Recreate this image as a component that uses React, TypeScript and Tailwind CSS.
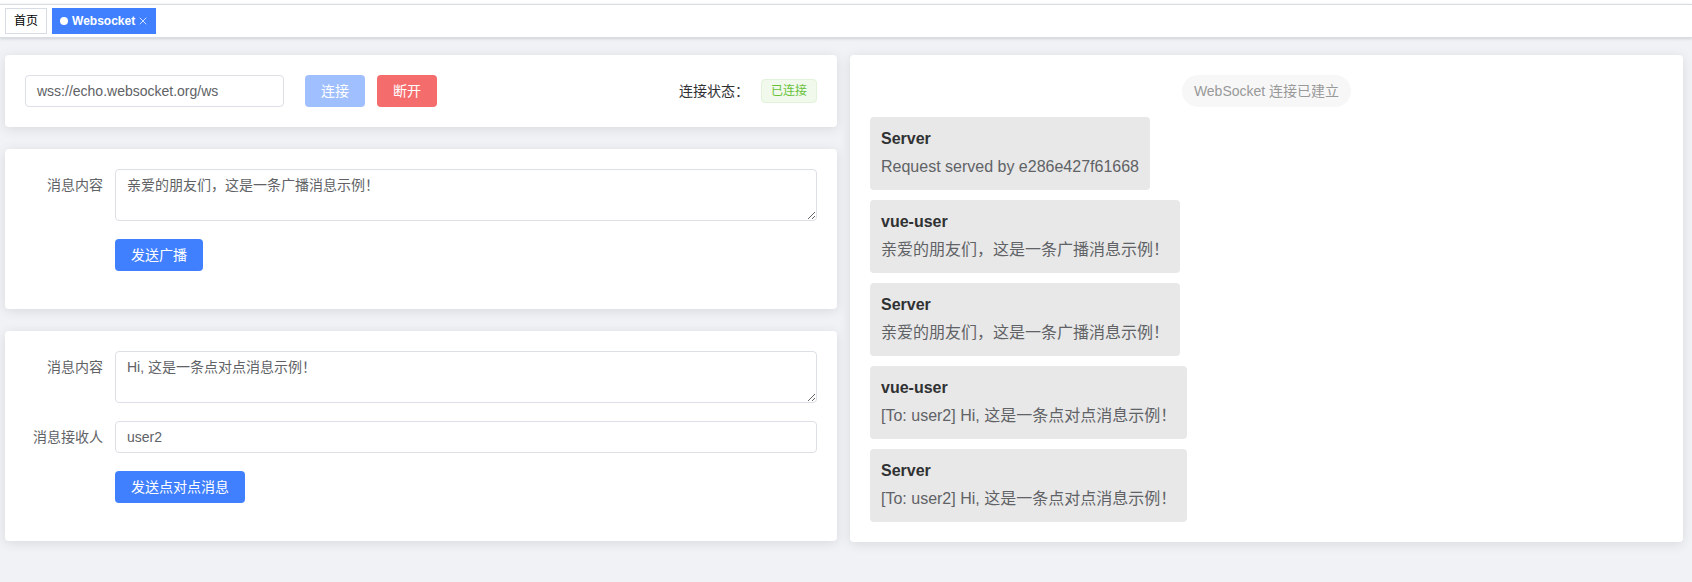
import React from 'react';
import { X } from 'lucide-react';

const font = "font-['Liberation_Sans','Noto_Sans_CJK_SC',sans-serif]";

const messages = [
  { from: 'Server', text: 'Request served by e286e427f61668' },
  { from: 'vue-user', text: '亲爱的朋友们，这是一条广播消息示例！' },
  { from: 'Server', text: '亲爱的朋友们，这是一条广播消息示例！' },
  { from: 'vue-user', text: '[To: user2] Hi, 这是一条点对点消息示例！' },
  { from: 'Server', text: '[To: user2] Hi, 这是一条点对点消息示例！' },
];

const card = 'bg-white rounded-[4px] shadow-[0_2px_12px_0_rgba(0,0,0,0.1)]';

const FormRow: React.FC<{ label: string; children: React.ReactNode }> = ({ label, children }) => (
  <div className="flex mb-[18px]">
    <label className="w-[90px] shrink-0 pr-[12px] text-right text-[14px] leading-[32px] text-[#606266]">{label}</label>
    <div className="flex-1">{children}</div>
  </div>
);

const App: React.FC = () => {
  return (
    <div className={`${font} w-full min-h-[582px] bg-[#f0f2f5]`}>
      {/* tags bar */}
      <div className="h-[4px] bg-white" />
      <div className="h-[34px] bg-white border-t border-b border-[#d8dce5] shadow-[0_1px_3px_0_rgba(0,0,0,0.12),0_0_3px_0_rgba(0,0,0,0.04)] flex items-center gap-[5px] px-[5px]">
        <div className="h-[26px] px-[8px] border border-[#d8dce5] bg-white flex items-center text-[12px] text-black">首页</div>
        <div className="h-[26px] pl-[7px] pr-[6px] border border-[#4080ff] bg-[#4080ff] flex items-center text-[12px] font-bold text-white">
          <span className="w-[8px] h-[8px] rounded-full bg-white mr-[4px]" />
          Websocket
          <X size={12} strokeWidth={1.5} className="ml-[2px]" />
        </div>
      </div>

      <div className="flex gap-[13px] pt-[17px] pl-[5px] pr-[9px]">
        {/* left column */}
        <div className="w-[832px] shrink-0 flex flex-col gap-[22px]">
          <div className={`${card} p-[20px] flex items-center`}>
            <div className="w-[259px] h-[32px] border border-[#dcdfe6] rounded-[4px] px-[11px] flex items-center text-[14px] text-[#606266]">
              wss://echo.websocket.org/ws
            </div>
            <button className="ml-[21px] w-[60px] h-[32px] rounded-[4px] bg-[#a0bfff] text-white text-[14px]">连接</button>
            <button className="ml-[12px] w-[60px] h-[32px] rounded-[4px] bg-[#f56c6c] text-white text-[14px]">断开</button>
            <div className="ml-auto flex items-center">
              <span className="text-[14px] text-[#303133] mr-[12px]">连接状态：</span>
              <span className="h-[24px] px-[9px] flex items-center rounded-[4px] border border-[#e1f3d8] bg-[#f0f9eb] text-[12px] text-[#67c23a]">已连接</span>
            </div>
          </div>

          <div className={`${card} p-[20px]`}>
            <FormRow label="消息内容">
              <textarea
                className="block w-full h-[52px] border border-[#dcdfe6] rounded-[4px] px-[11px] py-[5px] text-[14px] leading-[21px] text-[#606266] outline-none"
                defaultValue="亲爱的朋友们，这是一条广播消息示例！"
              />
            </FormRow>
            <div className="flex mb-[18px]">
              <div className="w-[90px] shrink-0" />
              <button className="h-[32px] w-[88px] rounded-[4px] bg-[#4080ff] text-white text-[14px]">发送广播</button>
            </div>
          </div>

          <div className={`${card} p-[20px]`}>
            <FormRow label="消息内容">
              <textarea
                className="block w-full h-[52px] border border-[#dcdfe6] rounded-[4px] px-[11px] py-[5px] text-[14px] leading-[21px] text-[#606266] outline-none"
                defaultValue="Hi, 这是一条点对点消息示例！"
              />
            </FormRow>
            <FormRow label="消息接收人">
              <div className="w-full h-[32px] border border-[#dcdfe6] rounded-[4px] px-[11px] flex items-center text-[14px] text-[#606266]">user2</div>
            </FormRow>
            <div className="flex mb-[18px]">
              <div className="w-[90px] shrink-0" />
              <button className="h-[32px] w-[130px] rounded-[4px] bg-[#4080ff] text-white text-[14px]">发送点对点消息</button>
            </div>
          </div>
        </div>

        {/* right column: message log */}
        <div className={`${card} flex-1 self-start p-[20px] flex flex-col items-start`}>
          <div className="self-center h-[32px] px-[12px] rounded-full bg-[#f7f7f7] flex items-center text-[14px] text-[#999999] mb-[10px]">
            WebSocket 连接已建立
          </div>
          <div className="flex flex-col items-start gap-[10px]">
            {messages.map((m, i) => (
              <div key={i} className="bg-[#e8e8e8] rounded-[4px] px-[11px] pt-[10px] pb-[11px]">
                <div className="text-[16px] leading-[24px] font-bold text-[#303133] mb-[4px]">{m.from}</div>
                <div className="text-[16px] leading-[24px] text-[#606266]">{m.text}</div>
              </div>
            ))}
          </div>
        </div>
      </div>
    </div>
  );
};

export default App;
